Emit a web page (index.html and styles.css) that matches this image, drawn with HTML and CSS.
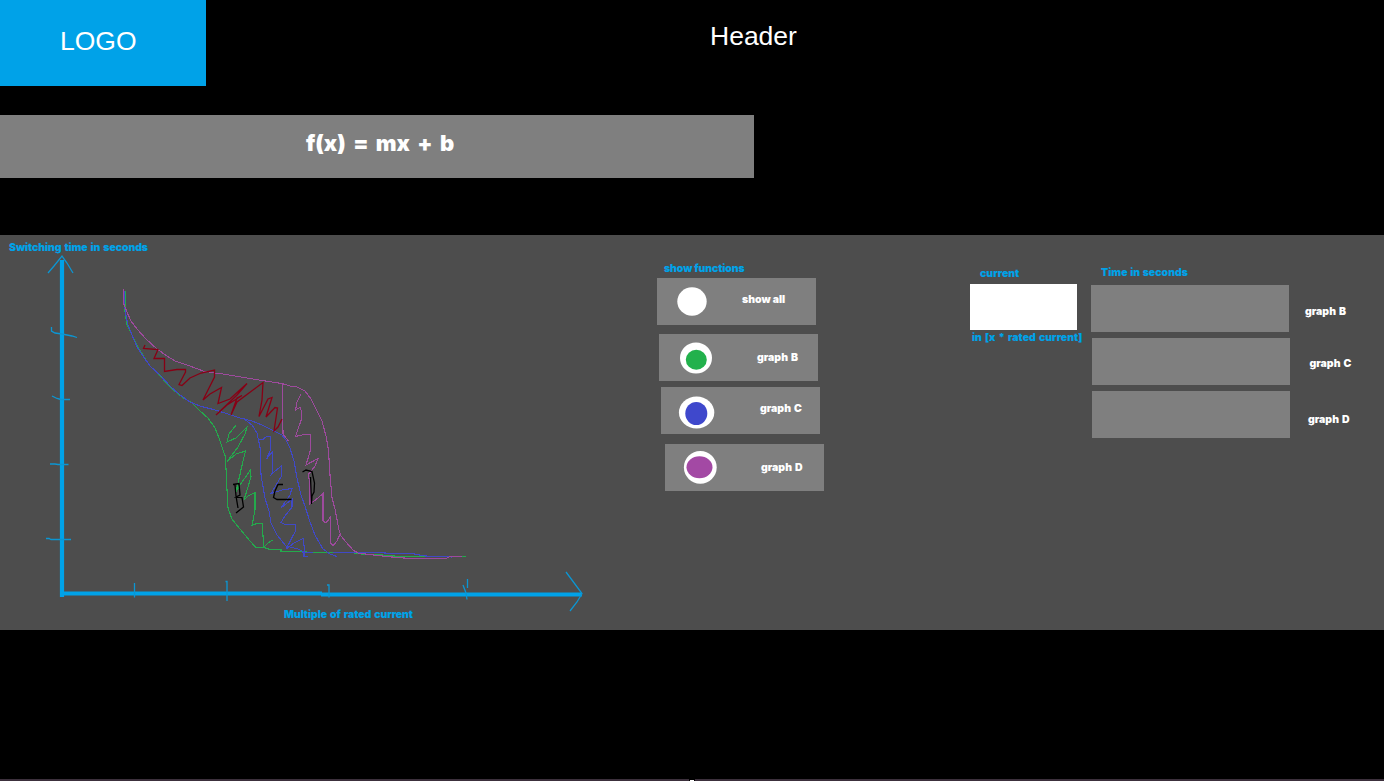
FILE: index.html
```html
<!DOCTYPE html>
<html lang="en">
<head>
<meta charset="utf-8">
<title>Header</title>
<link rel="stylesheet" href="styles.css">
</head>
<body>
<header class="top">
  <div class="logo">LOGO</div>
  <h1 class="title">Header</h1>
</header>
<div class="formula"><span class="formula-text">f(x) = mx + b</span></div>
<main class="panel">
  <svg class="chart" viewBox="0 234 640 396" fill="none">
    <g class="axis-thick">
      <path d="M62 260V597M60 593.5H322M321 594.5H582"/>
    </g>
    <g class="axis-thin">
      <path d="M48 273L54 266 62 256 67 263 73 273M566 572L582 593.500 577 602 570 611"/>
      <path d="M51.500 327V331L55 333 62 334 72 336 77 337.500M52 396L57 398.500 61 399.500H70M50 464H55L58 464.500H68.500M46 538.500H49L51 539.500H71"/>
      <path d="M134.500 583V597.500M225.500 581.500H227V601M327 585H329V597.500M467.500 579V588M463 585L466 593 467 599.500"/>
    </g>
    <g class="curve-green">
      <path d="M125 291L125 312 127 325 133 337 139 349 150 366 161 377 171 388 182 397 192 403 200 411 208 418 215 428 219 438 223 450 225.500 457 226.500 480 228 508 232 519 240 529 250 541 256 547.500H264L270 549.500H281V551.500H300L313 552.500H333M354 553.500L370 554.500 382 555 400 556.500H466"/>
      <path d="M236 425L229 434 227 442 236 438 247 427 245 434 238 447 227 461.500 236 454 245.500 451 243 461 236 492 240 485 250.500 470 251 477 244 500 248 496 255 492.500V510L252 525.500 257 523.500H262.500L263.500 547.500 268 543 272.500 540"/>
    </g>
    <g class="curve-blue">
      <path d="M124.500 291V303L125.500 313 128 325 132 335 137 347 143 356 150 366 160 375 170 386 180 395 190 402 200 406 215 410 225 413 240 418 252 421 262 425 274 431 282 435 286 440 290 448 294 461 297 478 301 495 305 506 310 522 315 535 323 549 330 554 337 556.500"/>
      <path d="M243 418L252 425 257 433 260.500 450 261 475 265 498 269 511 271 523 277 535 286 546 298 549 304 552V556.500H307.500M333 552.500H377L393 553.500H412L425 556 452 557M302 552.500H313"/>
      <path d="M258.500 439L262 440 266 437 270.500 436.500V450L266.500 459 272.500 451.500V473L270 476 275 471 281.500 466V476L271 493.500 282 490 292 488.500 290 495 281 508 292 499V507L285 516 281 522.500 285 524.500H295.500V531L286 549 294 543 303 538.500 305 552"/>
    </g>
    <g class="curve-magenta">
      <path d="M123.500 289V303L127 312 131 321 137 329 146 339 157 349 167 356 175 361 190 366 203 371 215 373 223 374 235 376 262 380.500 282 383.500 290 386 297 387 305 391 311 399 317 411 322 421 326 436 328.500 450 330 475 332 498 335 509 339 530 341 536 346 542 353 550 358 553 373 555 392 557 410 558.500H446L450 556.500H462"/>
      <path d="M282.500 384L283 434 286 438 288.500 441"/>
      <path d="M301 394L297 402 295.500 410 300 407.500 301.500 411V419L295.500 436.500 304 434.500H310.500V450L306 465 318 458.500 315 466 308 475 310 482V504L318 498 323 493.500V521L326 523 330.500 517V543L333 545.500 337 541 340 534"/>
    </g>
    <path class="scribble-red" d="M145 345L143.500 348.500 158 349.500 154 358.500H164.500V371.500L177 369.500H185.500V372L179 384.500 182 385.500 190 378 201 373 214.500 370V377L203 400 210 394 221.500 387.500 218 403.500 230 399 247 383.500 237 395 216 415 227 405 242 395.500 237 398 231 415 237 402 263 382.500 262 400 259 416.500 268 399 272 397.500 266 417 275 407.500 277.500 408 274 431 278 427 282 419"/>
    <path class="ink" d="M233 484.500L239 483.500 240 495 236 497 242 497.500 243.500 507 236 513M235 485L236 496 238 508M283 484.500H278L275 491 273.500 497.500 277 499.500H291.500M302.500 472L306 470 312 471.500 314.500 483 314 492 312 496 311.500 504 310.500 477"/>
    <text class="chart-label" x="9" y="251" textLength="139">Switching time in seconds</text>
    <text class="chart-label" x="284" y="618" textLength="129">Multiple of rated current</text>
  </svg>
  <section class="functions">
    <p class="label functions-label">show functions</p>
    <button class="fn fn-all"><svg class="dot" viewBox="0 0 60 47"><ellipse class="disc" cx="35" cy="23.500" rx="14.700" ry="14.300"/></svg><span class="fn-name">show all</span></button>
    <button class="fn fn-b"><svg class="dot" viewBox="0 0 60 47"><ellipse class="disc" cx="37" cy="24" rx="16" ry="15.500"/><ellipse class="green" cx="37.300" cy="25.700" rx="10.500" ry="10"/></svg><span class="fn-name">graph B</span></button>
    <button class="fn fn-c"><svg class="dot" viewBox="0 0 60 47"><ellipse class="disc" cx="35.600" cy="25.500" rx="17.700" ry="16"/><ellipse class="blue" cx="35.300" cy="26.500" rx="11" ry="11.500"/></svg><span class="fn-name">graph C</span></button>
    <button class="fn fn-d"><svg class="dot" viewBox="0 0 60 47"><ellipse class="disc" cx="35.300" cy="23.300" rx="16.400" ry="16.400"/><ellipse class="magenta" cx="34.500" cy="23.300" rx="13" ry="11"/></svg><span class="fn-name">graph D</span></button>
  </section>
  <section class="current">
    <p class="label current-label">current</p>
    <input class="current-input" aria-label="current">
    <p class="label unit-label">in [x * rated current]</p>
  </section>
  <section class="times">
    <p class="label times-label">Time in seconds</p>
    <div class="time-row time-b"><output class="time-box"></output><span class="time-name">graph B</span></div>
    <div class="time-row time-c"><output class="time-box"></output><span class="time-name">graph C</span></div>
    <div class="time-row time-d"><output class="time-box"></output><span class="time-name">graph D</span></div>
  </section>
</main>
<footer class="strip"><span class="grip"></span></footer>
</body>
</html>
```
FILE: styles.css
```css
* { box-sizing: border-box; }
body {
  margin: 0;
  width: 1384px;
  height: 781px;
  overflow: hidden;
  display: flex;
  flex-direction: column;
  background: #000;
  color: #fff;
  font-family: "Liberation Sans", Arial, sans-serif;
}
p { margin: 0; }
.top { display: flex; height: 86px; }
.logo {
  width: 206px;
  padding: 25px 0 0 60px;
  background: #00a2e8;
  font-size: 26.500px;
  line-height: 32px;
}
.title {
  margin: 20px 0 0 504px;
  font-size: 26.500px;
  font-weight: 400;
  line-height: 32px;
}
.formula {
  width: 754px;
  height: 63px;
  margin-top: 29px;
  padding: 13px 0 0 306px;
  background: #7f7f7f;
}
.formula-text {
  display: block;
  font: 900 22px/30px Inter, sans-serif;
  word-spacing: 3px;
  white-space: nowrap;
}
.panel {
  display: flex;
  height: 395px;
  margin-top: 57px;
  background: #4d4d4d;
  font: 900 10.500px/14px Inter, sans-serif;
  white-space: nowrap;
}
.chart { flex: none; width: 640px; height: 396px; margin-top: -1px; }
.axis-thick { stroke: #00a2e8; stroke-width: 4.200; }
.axis-thin { stroke: #0b96d3; stroke-width: 1.300; }
.curve-green, .curve-blue, .curve-magenta { stroke-width: 1.100; shape-rendering: crispEdges; }
.curve-green { stroke: #24aa4c; }
.curve-blue { stroke: #4049c6; }
.curve-magenta { stroke: #9e4a9d; }
.scribble-red { stroke: #880015; stroke-width: 1.300; }
.ink { stroke: #000; stroke-width: 1.300; }
.chart-label { fill: #00a2e8; font: 900 10.500px Inter, sans-serif; word-spacing: 1px; }
.label { color: #00a2e8; }
.functions { flex: none; width: 313px; padding: 27px 0 0 17px; }
.functions-label { margin-left: 7px; letter-spacing: -.1px; }
.fn {
  display: flex;
  width: 159px;
  height: 47px;
  padding: 0;
  border: 0;
  background: #7f7f7f;
  color: #fff;
  font: inherit;
  text-align: left;
}
.fn-name, .time-name { word-spacing: 1px; }
.dot { flex: none; width: 60px; height: 47px; }
.disc { fill: #fff; }
.green { fill: #22b14c; }
.blue { fill: #3f48cc; }
.magenta { fill: #a349a4; }
.fn-all { margin-top: 2px; }
.fn-b { margin: 9px 0 0 2px; }
.fn-c { margin: 6px 0 0 4px; }
.fn-d { margin: 10px 0 0 8px; }
.fn-all .fn-name { margin: 15px 0 0 25px; word-spacing: 0; }
.fn-b .fn-name { margin: 17px 0 0 38px; }
.fn-c .fn-name { margin: 15px 0 0 39px; }
.fn-d .fn-name { margin: 17px 0 0 36px; }
.current { flex: none; width: 138px; padding: 32px 0 0 17px; }
.current-label { margin-left: 10px; }
.current-input {
  display: block;
  width: 107px;
  height: 46px;
  margin-top: 3px;
  border: 0;
  background: #fff;
}
.unit-label { margin: 1px 0 0 2px; word-spacing: 1px; }
.times { padding-top: 31px; }
.times-label { margin-left: 10px; word-spacing: .5px; }
.time-row { display: flex; align-items: center; height: 47px; margin-top: 6px; }
.time-b { margin-top: 5px; }
.time-box { width: 198px; height: 47px; background: #7f7f7f; }
.time-c .time-box { margin-left: .5px; }
.time-d .time-box { margin-left: 1px; }
.time-b .time-name { margin: 6px 0 0 16px; }
.time-c .time-name { margin: 5px 0 0 20px; }
.time-d .time-name { margin: 10px 0 0 18px; }
.strip {
  display: flex;
  justify-content: center;
  height: 2px;
  margin-top: auto;
  background: #3c303c;
}
.grip { width: 6px; height: 2px; border: solid #000; border-width: 1px 1px 0; background: #fff; }
```
